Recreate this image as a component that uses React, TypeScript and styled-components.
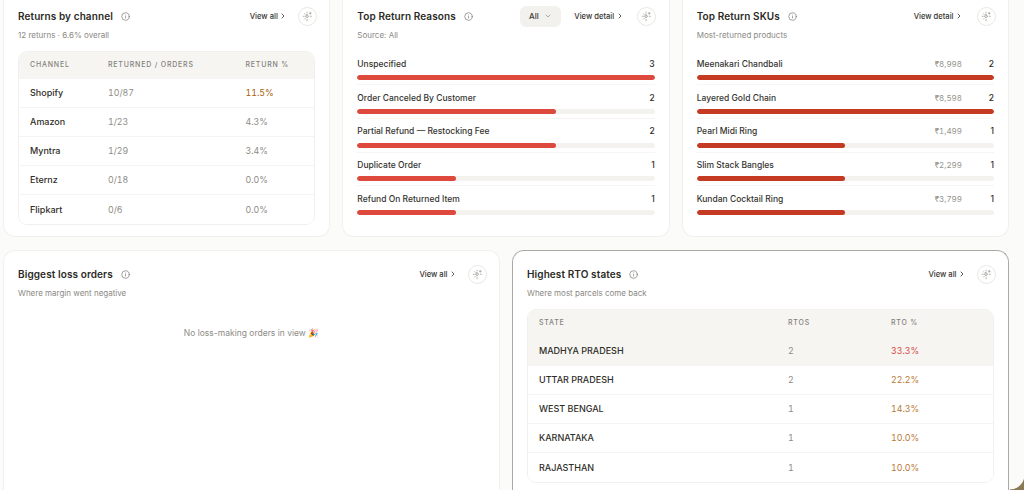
import React from "react";
import styled, { createGlobalStyle } from "styled-components";

const Global = createGlobalStyle`
  html, body { margin: 0; padding: 0; height: 100%; background: #fbfbfa; overflow: hidden; }
  #root { height: 100%; }
  * { box-sizing: border-box; }
`;

const Page = styled.div`
  width: 1024px;
  height: 490px;
  padding: 0 15px 0 3px;
  display: flex;
  flex-direction: column;
  gap: 12.500px;
  overflow: hidden;
  font-family: Inter, "Liberation Sans", sans-serif;
  color: #1f1e1b;
`;

const TopRow = styled.div`
  display: grid;
  grid-template-columns: repeat(3, 1fr);
  gap: 12px;
  height: 237px;
  flex: none;
`;

const BottomRow = styled.div`
  display: grid;
  grid-template-columns: repeat(2, 1fr);
  gap: 12px;
  flex: 1;
  min-height: 0;
`;

const Card = styled.section<{ $top?: boolean; $focus?: boolean }>`
  background: #fff;
  border: 1px solid ${(p) => (p.$focus ? "#a9a9a6" : "#f1f0ee")};
  border-top-width: ${(p) => (p.$top ? 0 : 1)}px;
  border-bottom-width: ${(p) => (p.$top ? 1 : 0)}px;
  border-radius: ${(p) => (p.$top ? "0 0 12px 12px" : "12px 12px 0 0")};
  padding: ${(p) => (p.$top ? "6.500px 14px 0" : "14px 14px 0")};
  min-width: 0;
  overflow: hidden;
`;

const Header = styled.header`
  display: flex;
  align-items: center;
  height: 19px;
`;

const Title = styled.h2`
  margin: 0;
  font-size: 10px;
  font-weight: 600;
  letter-spacing: 0.1px;
  color: #2b2a25;
  white-space: nowrap;
`;

const InfoBtn = styled.span`
  display: inline-flex;
  margin-left: 8px;
  color: #77756f;
`;

const Spacer = styled.div`
  flex: 1;
`;

const Filter = styled.button`
  display: flex;
  align-items: center;
  gap: 5px;
  height: 21px;
  padding: 0 9.500px;
  margin-right: 13px;
  border: 0;
  border-radius: 6px;
  background: #f2f1ed;
  font: 500 8px Inter, sans-serif;
  color: #3a3934;
`;

const LinkBtn = styled.a<{ $wide?: boolean }>`
  display: flex;
  align-items: center;
  gap: 1.500px;
  margin-right: ${(p) => (p.$wide ? 3 : 0)}px;
  font-size: 7.600px;
  font-weight: 500;
  color: #35342f;
  white-space: nowrap;
`;

const AskBtn = styled.span`
  width: 19px;
  height: 19px;
  margin-left: 10.500px;
  margin-right: -1.500px;
  flex: none;
  display: flex;
  align-items: center;
  justify-content: center;
  border: 1px solid #e9e8e5;
  border-radius: 50%;
  color: #a3a19b;
`;

const Subtitle = styled.p`
  margin: 3px 0 0;
  font-size: 8px;
  line-height: 12px;
  color: #8b8984;
`;

const TableWrap = styled.div`
  margin-top: 10.500px;
  border: 1px solid #f1f0ee;
  border-radius: 9px;
  overflow: hidden;
`;

const Grid = styled.div<{ $cols: string; $head?: boolean; $hl?: boolean; $h: number }>`
  display: grid;
  grid-template-columns: ${(p) => p.$cols};
  align-items: center;
  height: ${(p) => p.$h}px;
  padding-left: 11px;
  background: ${(p) => (p.$head || p.$hl ? "#f6f5f2" : "#fff")};
  border-bottom: 1px solid #f5f4f2;
  &:last-child { border-bottom: 0; }
`;

const HeadCell = styled.span`
  font-size: 7px;
  font-weight: 500;
  letter-spacing: 0.8px;
  color: #84827c;
  white-space: nowrap;
`;

const NameCell = styled.span`
  font-size: 9px;
  font-weight: 450;
  color: #2f2e29;
  white-space: nowrap;
`;

const MutedCell = styled.span<{ $tone?: string }>`
  font-size: 8.800px;
  font-variant-numeric: tabular-nums;
  color: ${(p) => p.$tone || "#8e8c86"};
`;

const Bars = styled.div`
  margin-top: 10.800px;
  display: flex;
  flex-direction: column;
`;

const BarItem = styled.div`
  height: 33.800px;
  padding-top: 6.500px;
  border-bottom: 1px solid #f6f5f3;
  &:last-child { border-bottom: 0; }
`;

const BarLabels = styled.div`
  display: flex;
  align-items: center;
  height: 12px;
`;

const BarName = styled.span`
  flex: 1;
  font-size: 8.500px;
  font-weight: 450;
  color: #35342f;
`;

const BarAmount = styled.span`
  margin-right: 12px;
  text-align: right;
  font-size: 8px;
  font-variant-numeric: tabular-nums;
  color: #96948e;
`;

const BarCount = styled.span`
  width: 20px;
  text-align: right;
  font-size: 8.500px;
  font-weight: 500;
  color: #2a2925;
`;

const Track = styled.div`
  margin-top: 5.200px;
  height: 5px;
  border-radius: 3px;
  background: #f3f2ee;
  overflow: hidden;
`;

const Fill = styled.div<{ $color: string }>`
  height: 100%;
  border-radius: 3px;
  background: ${(p) => p.$color};
`;

const Empty = styled.div`
  margin-top: 29px;
  text-align: center;
  font-size: 8.500px;
  color: #8e8c86;
`;

const Wallpaper = styled.div`
  position: fixed;
  right: 0;
  bottom: 0;
  width: 14px;
  height: 15px;
  background: radial-gradient(circle at 0 0, transparent 14px, #8a7a55 14.800px);
`;

const Info = () => (
  <InfoBtn>
    <svg width="9" height="9" viewBox="0 0 24 24" fill="none" stroke="currentColor" strokeWidth="1.800" strokeLinecap="round">
      <circle cx="12" cy="12" r="10" />
      <path d="M12 16v-4M12 8h.01" />
    </svg>
  </InfoBtn>
);

const Chevron = () => (
  <svg width="8" height="8" viewBox="0 0 24 24" fill="none" stroke="currentColor" strokeWidth="2.400" strokeLinecap="round" strokeLinejoin="round">
    <path d="m9 18 6-6-6-6" />
  </svg>
);

const Down = () => (
  <svg width="8" height="8" viewBox="0 0 24 24" fill="none" stroke="#8b8984" strokeWidth="2" strokeLinecap="round" strokeLinejoin="round">
    <path d="m6 9 6 6 6-6" />
  </svg>
);

const Sparkle = () => (
  <svg width="11" height="11" viewBox="0 0 24 24" fill="none" stroke="currentColor" strokeWidth="1.700" strokeLinecap="round" strokeLinejoin="round">
    <path d="M11 7.500l1.200 2.800 2.800 1.200-2.800 1.200-1.200 2.800-1.200-2.800-2.800-1.200 2.800-1.200z" />
    <path d="M11 2.500v2M11 18.500v3M2.500 11.500h2.500M18 11.500h2.500M5.500 6l1.500 1.500M5.500 17.500l1.500-1.500" />
    <path d="M18 3v4M16 5h4" />
  </svg>
);

const CardHeader = ({ title, link, filter }: { title: string; link: string; filter?: boolean }) => (
  <Header>
    <Title>{title}</Title>
    <Info />
    <Spacer />
    {filter && (
      <Filter>
        All <Down />
      </Filter>
    )}
    <LinkBtn $wide={link === "View detail"}>
      {link} <Chevron />
    </LinkBtn>
    <AskBtn>
      <Sparkle />
    </AskBtn>
  </Header>
);

const channels = [
  ["Shopify", "10/87", "11.5%", "#a9620e"],
  ["Amazon", "1/23", "4.3%", ""],
  ["Myntra", "1/29", "3.4%", ""],
  ["Eternz", "0/18", "0.0%", ""],
  ["Flipkart", "0/6", "0.0%", ""],
];

const reasons: [string, number, number][] = [
  ["Unspecified", 3, 100],
  ["Order Canceled By Customer", 2, 66.7],
  ["Partial Refund — Restocking Fee", 2, 66.7],
  ["Duplicate Order", 1, 33.3],
  ["Refund On Returned Item", 1, 33.3],
];

const skus: [string, string, number, number][] = [
  ["Meenakari Chandbali", "₹8,998", 2, 100],
  ["Layered Gold Chain", "₹8,598", 2, 100],
  ["Pearl Midi Ring", "₹1,499", 1, 50],
  ["Slim Stack Bangles", "₹2,299", 1, 50],
  ["Kundan Cocktail Ring", "₹3,799", 1, 50],
];

const states = [
  ["MADHYA PRADESH", "2", "33.3%", "#d94a42"],
  ["UTTAR PRADESH", "2", "22.2%", "#b97a35"],
  ["WEST BENGAL", "1", "14.3%", "#b97a35"],
  ["KARNATAKA", "1", "10.0%", "#b97a35"],
  ["RAJASTHAN", "1", "10.0%", "#b97a35"],
];

const chCols = "78px 137.5px 1fr";
const stCols = "249px 103px 1fr";

export default function App() {
  return (
    <Page>
      <Global />
      <TopRow>
        <Card $top>
          <CardHeader title="Returns by channel" link="View all" />
          <Subtitle>12 returns · 6.6% overall</Subtitle>
          <TableWrap>
            <Grid $cols={chCols} $head $h={26.7}>
              <HeadCell>CHANNEL</HeadCell>
              <HeadCell>RETURNED / ORDERS</HeadCell>
              <HeadCell>RETURN %</HeadCell>
            </Grid>
            {channels.map(([n, r, p, c]) => (
              <Grid key={n} $cols={chCols} $h={29}>
                <NameCell>{n}</NameCell>
                <MutedCell>{r}</MutedCell>
                <MutedCell $tone={c}>{p}</MutedCell>
              </Grid>
            ))}
          </TableWrap>
        </Card>
        <Card $top>
          <CardHeader title="Top Return Reasons" link="View detail" filter />
          <Subtitle>Source: All</Subtitle>
          <Bars>
            {reasons.map(([n, v, w]) => (
              <BarItem key={n}>
                <BarLabels>
                  <BarName>{n}</BarName>
                  <BarCount>{v}</BarCount>
                </BarLabels>
                <Track>
                  <Fill $color="#dd4a3d" style={{ width: `${w}%` }} />
                </Track>
              </BarItem>
            ))}
          </Bars>
        </Card>
        <Card $top>
          <CardHeader title="Top Return SKUs" link="View detail" />
          <Subtitle>Most-returned products</Subtitle>
          <Bars>
            {skus.map(([n, a, v, w]) => (
              <BarItem key={n}>
                <BarLabels>
                  <BarName>{n}</BarName>
                  <BarAmount>{a}</BarAmount>
                  <BarCount>{v}</BarCount>
                </BarLabels>
                <Track>
                  <Fill $color="#c53a22" style={{ width: `${w}%` }} />
                </Track>
              </BarItem>
            ))}
          </Bars>
        </Card>
      </TopRow>
      <BottomRow>
        <Card>
          <CardHeader title="Biggest loss orders" link="View all" />
          <Subtitle>Where margin went negative</Subtitle>
          <Empty>No loss-making orders in view 🎉</Empty>
        </Card>
        <Card $focus>
          <CardHeader title="Highest RTO states" link="View all" />
          <Subtitle>Where most parcels come back</Subtitle>
          <TableWrap>
            <Grid $cols={stCols} $head $h={26.7}>
              <HeadCell>STATE</HeadCell>
              <HeadCell>RTOS</HeadCell>
              <HeadCell>RTO %</HeadCell>
            </Grid>
            {states.map(([n, r, p, c], i) => (
              <Grid key={n} $cols={stCols} $h={29} $hl={i === 0}>
                <NameCell>{n}</NameCell>
                <MutedCell>{r}</MutedCell>
                <MutedCell $tone={c}>{p}</MutedCell>
              </Grid>
            ))}
          </TableWrap>
        </Card>
      </BottomRow>
      <Wallpaper />
    </Page>
  );
}
